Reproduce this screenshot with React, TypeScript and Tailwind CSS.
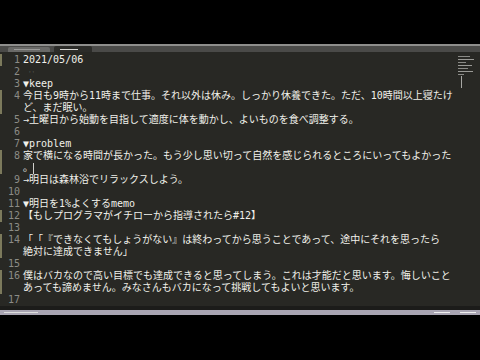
type Row = { n?: number; text: string; mark?: boolean; cursor?: boolean }

const rows: Row[] = [
  { n: 1, text: '2021/05/06', mark: true },
  { n: 2, text: '' },
  { n: 3, text: '▼keep' },
  { n: 4, text: '今日も9時から11時まで仕事。それ以外は休み。しっかり休養できた。ただ、10時間以上寝たけ', mark: true },
  { text: 'ど、まだ眠い。', mark: true },
  { n: 5, text: '→土曜日から始動を目指して適度に体を動かし、よいものを食べ調整する。' },
  { n: 6, text: '' },
  { n: 7, text: '▼problem' },
  { n: 8, text: '家で横になる時間が長かった。もう少し思い切って自然を感じられるところにいってもよかった', mark: true },
  { text: '。', mark: true, cursor: true },
  { n: 9, text: '→明日は森林浴でリラックスしよう。' },
  { n: 10, text: '' },
  { n: 11, text: '▼明日を1%よくするmemo' },
  { n: 12, text: '【もしプログラマがイチローから指導されたら#12】', mark: true },
  { n: 13, text: '' },
  { n: 14, text: '「「『できなくてもしょうがない』は終わってから思うことであって、途中にそれを思ったら', mark: true },
  { text: '絶対に達成できません」', mark: true },
  { n: 15, text: '' },
  { n: 16, text: '僕はバカなので高い目標でも達成できると思ってしまう。これは才能だと思います。悔しいこと', mark: true },
  { text: 'あっても諦めません。みなさんもバカになって挑戦してもよいと思います。', mark: true },
  { n: 17, text: '' },
]

export default function App() {
  return (
    <div className="w-[480px] h-[360px] bg-black flex flex-col overflow-hidden font-['DejaVu_Sans_Mono','Noto_Sans_CJK_JP',monospace]">
      <div className="h-[44px] shrink-0" />

      {/* tab bar */}
      <div className="h-[8px] shrink-0 bg-[#4a4a48] border-t-[2px] border-[#8e8e8c] flex items-end gap-[4px] pl-[8px]">
        <div className="w-[42px] h-[5px] bg-[#6a6a68] rounded-t-[2px] flex items-center px-[6px]">
          <div className="h-px w-[26px] bg-[#9a9a98]" />
        </div>
        <div className="w-[38px] h-[6px] bg-[#2c2c29] rounded-t-[2px] flex items-center px-[6px]">
          <div className="h-px w-[18px] bg-[#d8d8d4]" />
        </div>
      </div>

      {/* editor */}
      <div className="h-[254px] shrink-0 bg-[#282824] pt-[2px] relative">
        {rows.map((r, i) => (
          <div key={i} className="flex h-[12px] items-center text-[10px] leading-[12px]">
            <span className={`w-[2px] h-[12px] ${r.mark ? 'bg-[#7c7a5c]' : ''}`} />
            <span className="w-[18px] text-right text-[#8c8c86]">{r.n ?? ''}</span>
            <span className="ml-[3px] whitespace-pre text-[#f0f0ea] flex items-center [text-spacing-trim:space-all]">
              {r.text}
              {r.cursor && <span className="inline-block w-px h-[11px] bg-[#d0d0cc]" />}
              {r.n === 2 && <span className="ml-[5px] text-[#77776f] text-[6px]">··</span>}
            </span>
          </div>
        ))}

        {/* minimap */}
        <div className="absolute right-[6px] top-[4px] w-[16px] flex flex-col gap-[2px]">
          <div className="h-px w-[12px] bg-[#8a8a86]" />
          <div className="h-px w-[16px] bg-[#9a9a96]" />
          <div className="h-px w-[8px] bg-[#8a8a86]" />
          <div className="h-px w-[14px] bg-[#9a9a96]" />
          <div className="h-px w-[10px] bg-[#8a8a86]" />
          <div className="h-px w-[15px] bg-[#9a9a96]" />
          <div className="h-px w-[6px] bg-[#8a8a86]" />
        </div>
        <div className="absolute right-[18px] top-[24px] w-px h-[12px] bg-[#a8a8a4]" />
      </div>

      <div className="h-[4px] shrink-0 bg-[#1c1c1a]" />

      {/* status bar */}
      <div className="h-[5px] shrink-0 bg-[#a9a5b3] flex items-center px-[4px]">
        <div className="h-px w-[34px] bg-[#ddd]" />
        <div className="flex-1" />
        <div className="h-px w-[16px] bg-[#eee] mr-[10px]" />
        <div className="h-px w-[16px] bg-[#eee]" />
      </div>
    </div>
  )
}
